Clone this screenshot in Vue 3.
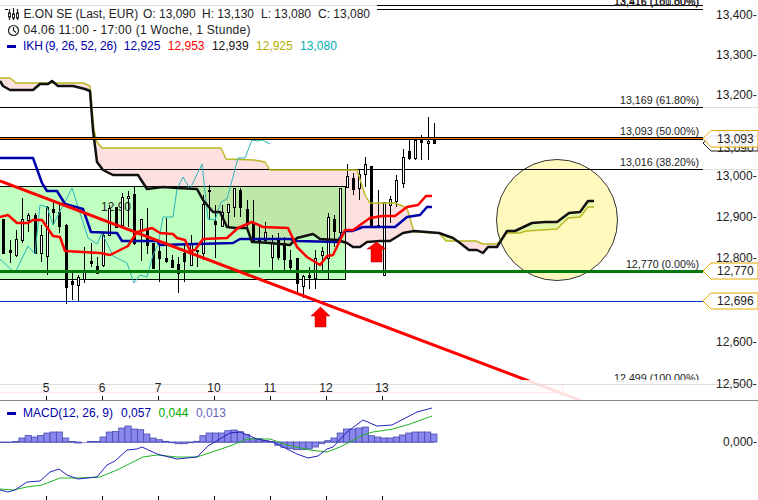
<script setup>
import { computed } from 'vue'

// x of bar n
const barX = n => 3.3 + 6.24 * n

// wick top, wick bottom, body top, body bottom, filled
const rawCandles = [
  [219,253,219,253,1],[240,263,250,252,1],[230,257,239,255,0],[198,243,219,240,0],[213,232,215,220,0],
  [213,253,215,253,1],[225,262,235,253,0],[206,275,207,256,0],[200,225,209,212,1],[205,233,212,226,1],
  [224,304,225,287,1],[273,300,281,284,1],[275,302,277,285,0],[247,283,270,279,0],[243,267,261,263,1],
  [257,273,266,273,1],[233,267,235,265,0],[205,236,208,235,0],[207,228,207,227,1],[193,227,197,225,0],
  [191,227,196,198,0],[187,245,194,243,1],[219,261,219,230,0],[208,254,228,245,1],[243,268,243,268,1],
  [243,282,251,258,1],[218,263,258,261,1],[255,267,260,267,1],[257,293,264,273,1],[243,282,253,261,1],
  [235,265,243,265,0],[250,267,250,251,1],[195,260,204,253,0],[185,220,190,191,1],[205,258,221,224,1],
  [205,226,212,226,0],[204,227,204,212,0],[188,217,188,207,0],[188,217,190,207,1],[200,227,209,224,1],
  [200,240,223,240,1],[225,267,240,241,1],[222,243,232,240,0],[235,270,243,257,0],[233,260,240,257,1],
  [237,270,243,259,1],[250,273,260,267,1],[258,292,258,283,1],[275,298,276,286,0],[267,289,275,277,1],
  [250,289,258,278,0],[247,273,251,255,0],[213,279,217,258,0],[215,247,219,231,1],[188,237,188,232,0],
  [164,187,176,187,0],[173,195,178,189,1],[170,200,174,188,0],[157,187,164,174,0],[166,227,166,227,1],
  [190,227,225,226,1],[202,275,202,275,0],[196,223,199,205,0],[175,207,180,201,0],[149,188,157,183,0],
  [140,160,151,158,1],[140,160,140,158,0],[135,160,140,142,1],[117,160,141,143,0],[123,143,140,143,1],
]
const candles = rawCandles.map((c, i) => ({
  id: i, x: Math.round(barX(i)) + 0.5, wt: c[0], wb: c[1], bt: c[2], bb: c[3], filled: !!c[4],
}))

const olive = [[0,78],[10,78],[16,83],[83,83],[90,86],[94,130],[97,142],[102,148],[221,148],[226,159],[254,160],[265,162],[270,170],[357,170],[365,195],[370,203],[395,203],[407,208],[414,232],[439,233],[446,241],[476,241],[483,244],[497,244],[507,233],[520,233],[526,231],[557,229],[568,218],[580,217],[588,207],[594,207]]
const black = [[0,81],[3,86],[10,90],[33,90],[40,84],[48,84],[52,81],[58,86],[73,86],[85,89],[90,91],[93,130],[97,162],[103,170],[113,175],[138,175],[147,189],[163,187],[177,188],[197,189],[203,200],[213,212],[220,212],[227,227],[235,228],[247,228],[252,242],[270,243],[290,245],[297,238],[313,234],[320,239],[337,240],[347,243],[353,247],[360,247],[367,242],[380,241],[390,241],[403,233],[414,231],[439,233],[453,238],[460,243],[469,250],[477,250],[483,253],[488,247],[497,247],[507,231],[515,231],[532,223],[545,222],[557,222],[569,213],[580,212],[588,201],[594,201]]

const pts = a => a.map(p => p.join(',')).join(' ')
const polyBetween = (a, b) => pts([...a, ...[...b].reverse()])

const kumoPink = computed(() => polyBetween(olive.filter(p => p[0] <= 497), black.filter(p => p[0] <= 497)))
const kumoGreen = computed(() => polyBetween(olive.filter(p => p[0] >= 507), black.filter(p => p[0] >= 507)))
const olivePts = pts(olive)
const blackPts = pts(black)

const bluePts = '0,158 33,158 42,183 47,191 57,191 65,204 83,209 91,232 117,233 122,241 157,241 160,245 233,243 240,239 290,239 297,241 337,242 345,231 352,231 363,227 395,227 407,217 420,215 427,207 432,207'
const redPts = '0,217 8,215 17,223 28,223 33,220 42,220 53,236 60,237 65,251 100,253 110,255 128,246 137,232 152,228 160,233 173,234 177,238 185,240 190,251 195,250 203,239 227,238 238,228 252,222 263,227 288,228 297,247 307,257 320,265 327,256 333,255 345,230 353,230 370,218 382,216 395,216 407,207 418,205 426,196 432,196'
const cyanPts = '0,259 15,273 28,246 35,254 40,205 47,207 53,225 72,188 88,238 97,244 102,233 113,256 127,263 134,283 140,275 147,277 153,255 158,245 163,217 173,217 177,189 183,177 190,189 202,164 208,219 215,220 221,202 227,199 238,158 245,158 252,140 257,141 262,140 270,144'

const fibLines = [
  { y: 107, label: '13,169 (61.80%)', base: 104 },
  { y: 169, label: '13,016 (38.20%)', base: 166 },
]

const axisLabels = [
  ['13,400', 19], ['13,300', 59], ['13,200', 99], ['13,100', 140], ['13,000', 180],
  ['12,900', 221], ['12,800', 262], ['12,600', 346], ['12,500', 388],
]
const tags = [
  { points: '758,263 711,263 703,271 711,279 758,279', label: '12,770', base: 275 },
  { points: '758,293 711,293 703,301 711,309 758,309', label: '12,696', base: 305 },
]
const days = [['5', 46], ['6', 102], ['7', 158], ['10', 214], ['11', 270], ['12', 326], ['13', 382]]

const hist = [-.5,-.5,.5,4,6.5,5,6.5,9,10,10,4,.5,-1,0,.5,.5,5,10,10.5,14,16,13,12.3,8,4,2.3,.7,-.7,-1.7,-1.7,-.7,.7,6.3,9,9,9,11.3,12,10.3,7.3,3.7,3.3,1.3,.3,-3.3,-5.3,-6.7,-7.7,-7.7,-7,-5,-1.7,1.3,4,9,13,13,14,15,6.3,5,4,4,5,7,9,10,10,10,8]
const zeroY = 41
const bars = hist.map((h, i) => ({
  id: i,
  x: barX(i) - 3.12,
  y: h >= 0 ? zeroY - h : zeroY,
  h: Math.abs(h),
}))
const macdPts = '0,89 8,91 15,89 27,81 40,80 50,71 59,68 67,74 78,78 97,76 107,64 115,60 127,49 137,48 142,46 157,53 177,58 197,56 208,45 230,32 240,31 248,34 257,38 273,41 283,46 297,53 308,57 318,55 327,48 333,46 347,31 363,19 377,25 392,24 417,11 432,7'
const signalPts = '0,88 13,89 27,86 42,84 60,77 78,77 100,76 117,69 143,56 157,54 177,56 197,56 230,45 247,38 270,38 287,44 310,49 327,51 340,46 363,34 373,31 393,28 410,23 432,15'
</script>

<template>
  <div class="chart">
    <div class="pane main">
      <svg class="plot" width="758" height="400">
        <rect x="0" y="0" width="758" height="400" class="bg" />
        <circle cx="557" cy="220" r="60.5" class="spot" />
        <polygon :points="kumoPink" class="kumo-pink" />
        <polygon :points="kumoGreen" class="kumo-green" />
        <polygon points="439,233 446,241 453,241 453,238" class="kumo-green" />
        <rect x="-2" y="186" width="347.5" height="93" class="fib-box" />

        <line x1="0" y1="5.5" x2="377" y2="5.5" class="grey" />
        <line x1="377" y1="5.5" x2="703" y2="5.5" class="thin" />
        <line x1="5" y1="9.5" x2="703" y2="9.5" class="thin" />
        <text x="699" y="5" text-anchor="end" class="fib">13,416 (161.80%)</text>
        <text x="699" y="6" text-anchor="end" class="fib">13,416 (100.00%)</text>

        <g v-for="f in fibLines" :key="f.y">
          <line x1="0" :y1="f.y + .5" x2="703" :y2="f.y + .5" class="thin" />
          <line x1="703" :y1="f.y + .5" x2="758" :y2="f.y + .5" class="grey" />
          <text x="699" :y="f.base" text-anchor="end" class="fib">{{ f.label }}</text>
        </g>
        <text x="699" y="135" text-anchor="end" class="fib">13,093 (50.00%)</text>
        <text x="699" y="268" text-anchor="end" class="fib">12,770 (0.00%)</text>
        <text x="699" y="382" text-anchor="end" class="fib">12,499 (100.00%)</text>
        <text x="101" y="211" class="stray">12,90</text>

        <g class="candles">
          <g v-for="c in candles" :key="c.id">
            <line :x1="c.x" :y1="c.wt" :x2="c.x" :y2="c.wb" class="wick" />
            <rect :x="c.x - 1" :y="c.bt" width="2" :height="Math.max(c.bb - c.bt, 1)" :class="c.filled ? 'body-full' : 'body-open'" />
          </g>
        </g>

        <polyline :points="olivePts" class="l-olive" />
        <polyline :points="cyanPts" class="l-cyan" />
        <polyline :points="bluePts" class="l-blue" />
        <polyline :points="blackPts" class="l-black" />
        <polyline :points="redPts" class="l-red" />

        <rect x="0" y="137" width="703" height="3" class="hl-black" />
        <rect x="0" y="138" width="703" height="1" class="hl-orange" />
        <rect x="0" y="270" width="703" height="3" class="hl-green" />
        <line x1="0" y1="301.5" x2="703" y2="301.5" class="hl-blue" />

        <line x1="0" y1="181" x2="587" y2="403" class="trend" />

        <polygon points="320.5,307 330,316 326,316 326,327 315,327 315,316 311,316" class="arrow" />
        <polygon points="376.5,242 386,249 382,249 382,262 371,262 371,249 367,249" class="arrow" />

        <rect x="-2" y="384.5" width="565" height="8" class="ghost" />
        <rect x="0" y="380" width="758" height="20" class="veil" />
        <line x1="0" y1="384.5" x2="755" y2="384.5" class="grid-faint" />

        <text v-for="a in axisLabels" :key="a[0]" x="716" :y="a[1]" class="axis">{{ a[0] }}-</text>

        <polygon points="758,136 711,136 703,143 711,151 758,151" class="tag-back" />
        <text x="717" y="152" class="axis">13,090</text>
        <polygon points="758,130.5 711,130.5 703,138.5 711,147 758,147" class="tag-top" />
        <text x="717" y="143" class="axis">13,093</text>
        <g v-for="t in tags" :key="t.label">
          <polygon :points="t.points" class="tag" />
          <text x="717" :y="t.base" class="axis">{{ t.label }}</text>
        </g>

        <g v-for="d in days" :key="d[0]">
          <text :x="d[1]" y="392" text-anchor="middle" class="axis">{{ d[0] }}</text>
          <line :x1="d[1] + .5" y1="396" :x2="d[1] + .5" y2="400" class="thin" />
        </g>
      </svg>

      <div class="legend">
        <div class="row">
          <svg class="ico" width="13" height="13" viewBox="0 0 13 13">
            <path d="M2.5 1v11M6.5 0v12M10.5 1v11" class="ico-line" />
            <rect x="1.5" y="5" width="2" height="4" class="ico-body" />
            <rect x="5.5" y="6" width="2" height="4" class="ico-body" />
            <rect x="9.5" y="5" width="2" height="5" class="ico-body" />
          </svg>
          <span class="name">E.ON SE (Last, EUR)</span>
          <span class="quote">O: 13,090</span>
          <span class="quote">H: 13,130</span>
          <span class="quote narrow">L: 13,080</span>
          <span class="quote">C: 13,080</span>
        </div>
        <div class="row">
          <svg class="ico" width="13" height="13" viewBox="0 0 13 13">
            <circle cx="6.5" cy="6.5" r="5" class="ico-line" />
            <path d="M6.5 3v3.5l2.5 2" class="ico-line" />
          </svg>
          <span class="period">04.06 11:00 - 17:00 (1 Woche, 1 Stunde)</span>
        </div>
        <div class="row">
          <span class="dash" />
          <span class="c-blue ikh">IKH</span>
          <span class="c-blue ikh-args">(9, 26, 52, 26)</span>
          <span class="c-blue val">12,925</span>
          <span class="c-red val">12,953</span>
          <span class="c-ink val">12,939</span>
          <span class="c-olive val">12,925</span>
          <span class="c-teal val">13,080</span>
        </div>
      </div>
    </div>

    <div class="pane sub">
      <svg class="plot" width="758" height="99">
        <line x1="0" :y1="zeroY + .5" x2="435" :y2="zeroY + .5" class="zero" />
        <rect v-for="b in bars" :key="b.id" :x="b.x" :y="b.y" width="6.24" :height="b.h" class="bar" />
        <polyline :points="signalPts" class="l-signal" />
        <polyline :points="macdPts" class="l-macd" />
        <text x="723" y="45" class="axis">0,000-</text>
        <line v-for="d in days" :key="d[0]" :x1="d[1] + .5" y1="95" :x2="d[1] + .5" y2="99" class="thin" />
      </svg>
      <div class="legend macd-legend">
        <div class="row">
          <span class="dash" />
          <span class="c-blue macd-name">MACD(12, 26, 9)</span>
          <span class="c-blue val">0,057</span>
          <span class="c-green val">0,044</span>
          <span class="c-slate val">0,013</span>
        </div>
      </div>
    </div>
  </div>
</template>

<style scoped>
.chart{ width:758px; height:500px; display:flex; flex-direction:column; background:#fff; overflow:hidden; font-family:"Liberation Sans", Arial, sans-serif; }
.pane{ position:relative; }
.main{ height:400px; border-bottom:0; }
.sub{ height:100px; border-top:1px solid #888; box-sizing:border-box; }
.plot{ display:block; }

.bg{ fill:#fff; }
.spot{ fill:#fff9be; stroke:#333; stroke-width:1; }
.kumo-pink{ fill:#fde0e0; }
.kumo-green{ fill:#e6f9ab; }
.fib-box{ fill:rgba(0,255,0,.25); stroke:#000; stroke-width:1; shape-rendering:crispEdges; }
.thin{ stroke:#000; stroke-width:1; shape-rendering:crispEdges; }
.grey{ stroke:#ddd; stroke-width:1; shape-rendering:crispEdges; }
.fib{ font-size:10.7px; fill:#222; }
.stray{ font-size:12px; fill:#222; }
.wick{ stroke:#000; stroke-width:1; shape-rendering:crispEdges; }
.body-full{ fill:#000; stroke:#000; stroke-width:1; shape-rendering:crispEdges; }
.body-open{ fill:#fff; stroke:#000; stroke-width:1; shape-rendering:crispEdges; }

polyline{ fill:none; stroke-linejoin:round; }
.l-olive{ stroke:#b8b81c; stroke-width:1.4; }
.l-cyan{ stroke:#2db4b8; stroke-width:1; }
.l-blue{ stroke:#0000aa; stroke-width:2.5; }
.l-black{ stroke:#111; stroke-width:2.5; }
.l-red{ stroke:#f00; stroke-width:2.5; }
.hl-black{ fill:#000; }
.hl-orange{ fill:#f07800; }
.hl-green{ fill:#007a0a; }
.hl-blue{ stroke:#0a32d2; stroke-width:1; shape-rendering:crispEdges; }
.trend{ stroke:#f00; stroke-width:3; }
.arrow{ fill:#f00; stroke:#a00; stroke-width:.5; }
.ghost{ fill:rgba(255,0,0,.12); stroke:#f33; stroke-width:1; }
.veil{ fill:rgba(255,255,255,.88); }
.grid-faint{ stroke:#ddd; stroke-width:1; }
.axis{ font-size:12px; fill:#222; }

.tag{ fill:#fff; stroke:#e6aa00; stroke-width:1; }
.tag-top{ fill:rgba(255,255,255,.85); stroke:#e6aa00; stroke-width:1; }
.tag-back{ fill:#fff; stroke:#222; stroke-width:1; }

.legend{ position:absolute; left:8px; top:5px; width:369px; height:47px; background:#fff; border-top:1px solid #ddd; box-sizing:border-box; font-size:12px; color:#222; }
.row{ display:flex; align-items:center; height:16px; white-space:nowrap; }
.ico{ flex:none; width:13px; margin-right:3.5px; margin-left:-1px; }
.ico-line{ fill:none; stroke:#222; stroke-width:1.2; }
.ico-body{ fill:#fff; stroke:#222; stroke-width:1; }
.name{ flex:none; width:119.5px; }
.quote{ width:59px; flex:none; }
.quote.narrow{ width:57px; }
.period{ letter-spacing:.28px; }
.dash{ width:9px; height:3px; background:#0000aa; margin-right:7px; flex:none; margin-left:-1px; }
.ikh{ margin-right:2px; }
.ikh-args{ margin-right:7px; letter-spacing:-.2px; }
.val{ margin-right:7.4px; }
.c-blue{ color:#0000aa; }
.c-red{ color:#f00; }
.c-ink{ color:#111; }
.c-olive{ color:#b0b000; }
.c-teal{ color:#00b0b4; }
.c-green{ color:#00aa00; }
.c-slate{ color:#6666bb; }

.macd-legend{ top:4px; height:16px; width:230px; background:none; border:0; }
.macd-name{ margin-right:8px; }

.zero{ stroke:#9a9ad8; stroke-width:1; }
.bar{ fill:#8888ee; stroke:#4a4ab0; stroke-width:.8; }
.l-macd{ stroke:#2222bb; stroke-width:1; }
.l-signal{ stroke:#22b422; stroke-width:1; }
</style>
